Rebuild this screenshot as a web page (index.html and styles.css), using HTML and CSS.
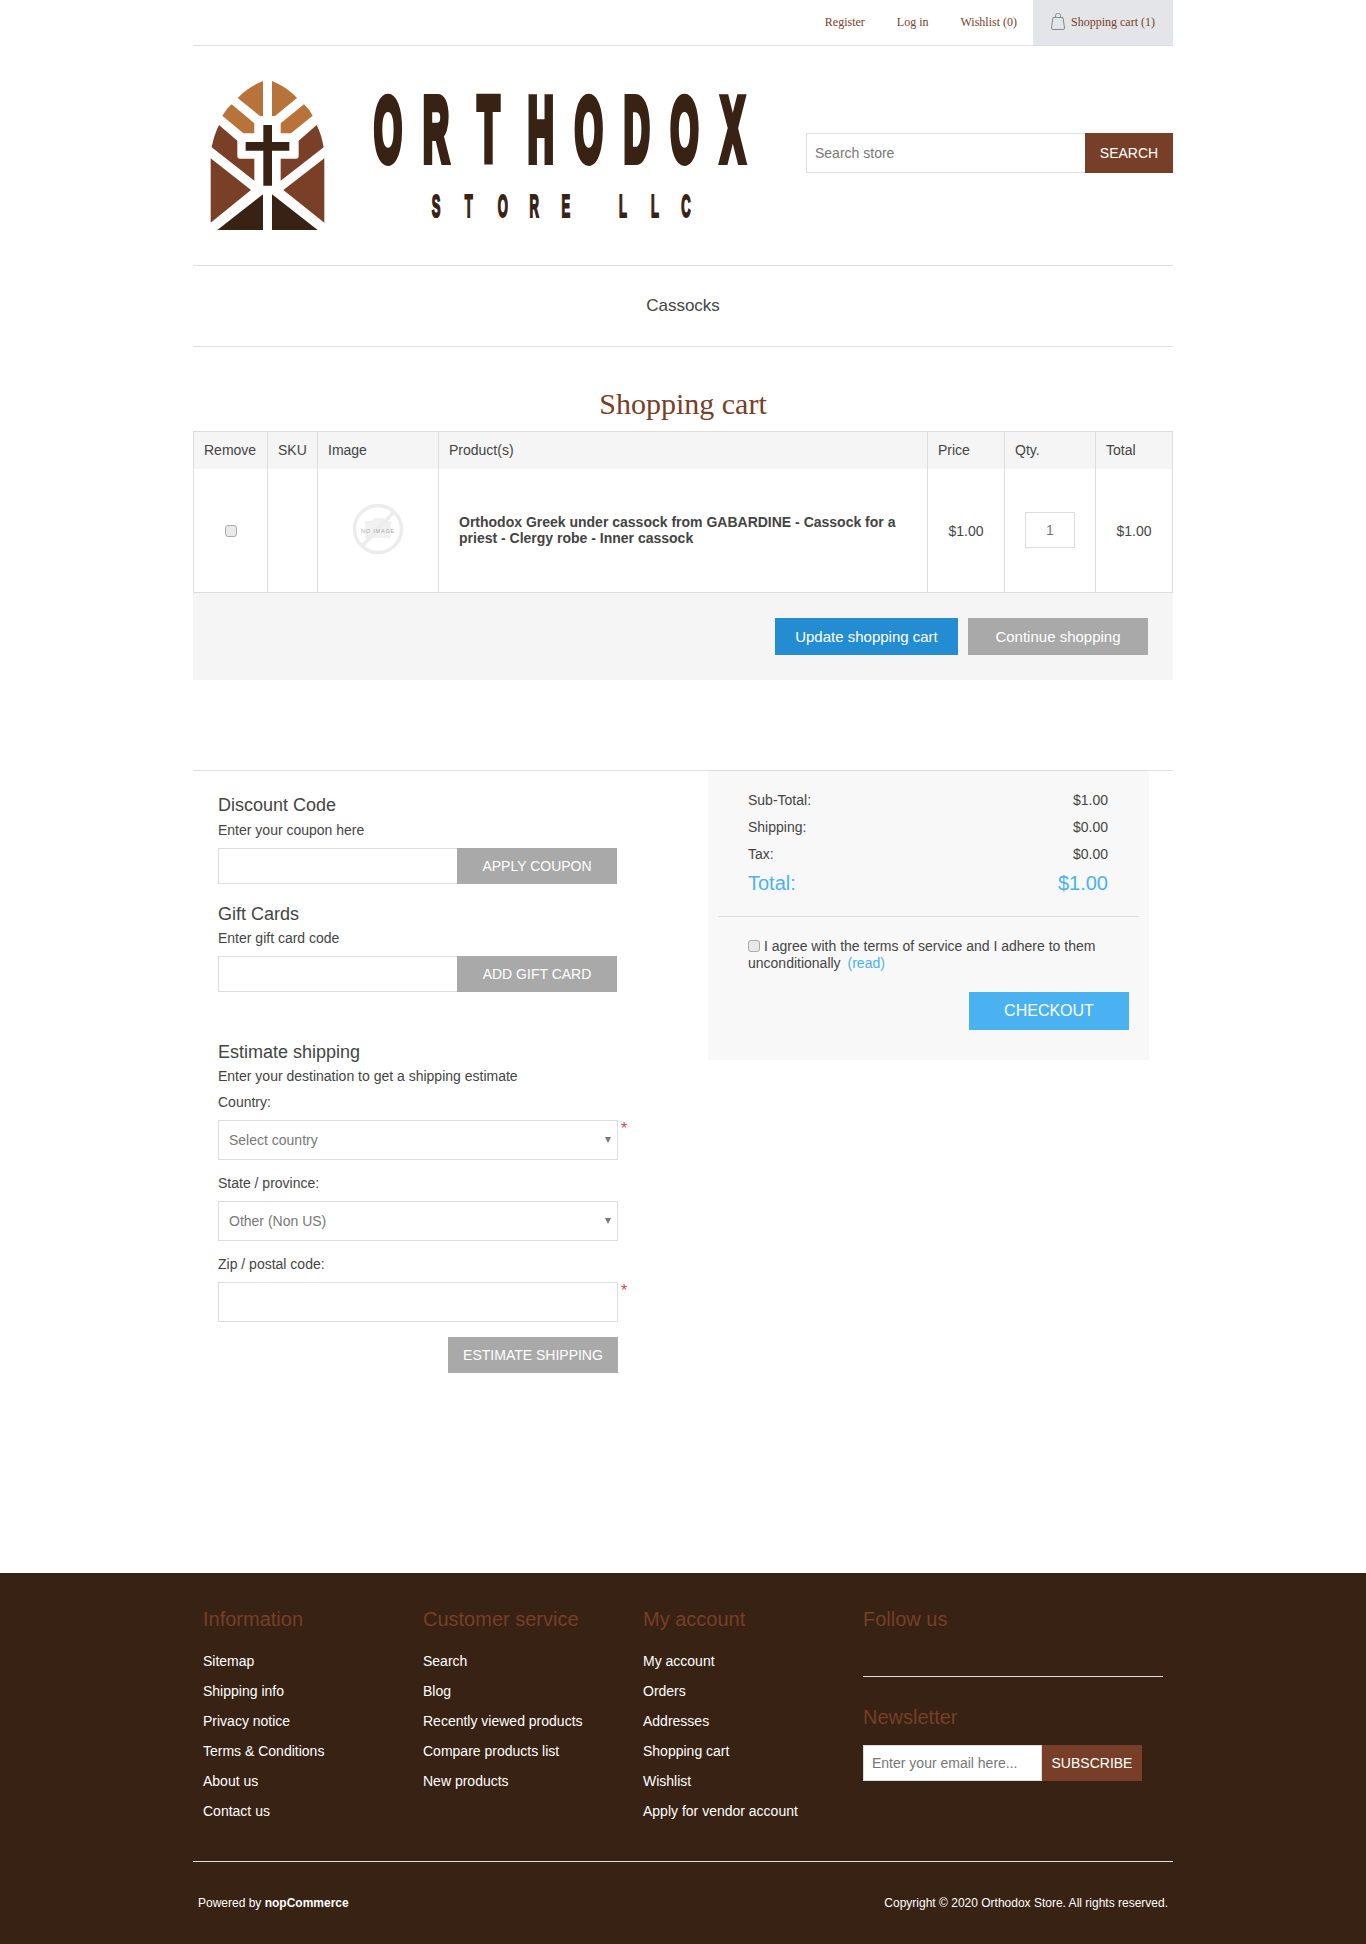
FILE: index.html
```html
<!DOCTYPE html>
<html lang="en">
<head>
  <meta charset="UTF-8">
  <title>Orthodox Store LLC. Shopping cart</title>
  <link rel="stylesheet" href="styles.css">
</head>
<body>
  <div class="wrap">
    <div class="top-bar">
      <a class="top-link" href="#">Register</a>
      <a class="top-link" href="#">Log in</a>
      <a class="top-link" href="#">Wishlist (0)</a>
      <a class="top-cart" href="#">
        <svg class="bag-icon" width="14" height="17" viewBox="0 0 14 17">
          <path d="M2 4.500h10l1.500 10.500q0 1.500-1.500 1.500H2q-1.500 0-1.500-1.500z M4.500 4.500V2.500q0-2 2-2h1q2 0 2 2v2" fill="none" stroke="#8a8a8a" stroke-width="1"/>
        </svg>
        Shopping cart (1)
      </a>
    </div>

    <div class="header">
      <svg class="logo" width="560" height="170" viewBox="0 0 560 170">
        <g transform="scale(.33333)">
          <path class="logo-light" d="M189 33V138H180L113 84Q145 50 189 33Z"/>
          <path class="logo-light" d="M216 33Q260 50 291 84L225 138H216Z"/>
          <path class="logo-light" d="M95 103L163 160V190H130L67 137Q80 115 95 103Z"/>
          <path class="logo-light" d="M242 160L312 103Q330 120 338 137L273 190H242Z"/>
          <path class="logo-mid" d="M57 165L112 212V258Q112 266 120 266H163V332L35 232Q42 195 57 165Z"/>
          <path class="logo-mid" d="M350 165Q365 195 371 232L242 332V266H288Q296 266 296 258V212Z"/>
          <path class="logo-mid" d="M32 265L153 360L32 458Z"/>
          <path class="logo-mid" d="M373 265V458L250 360Z"/>
          <path class="logo-dark" d="M189 373V480H52Z"/>
          <path class="logo-dark" d="M216 373L353 480H216Z"/>
          <path class="logo-dark" d="M190 165H216V216H268V242H216V347H190V242H137V216H190Z"/>
        </g>
        <text class="logo-big" transform="translate(0 91) scale(.4 1)" x="470 590 721 852 972 1092 1211 1332" y="0">ORTHODOX</text>
        <text class="logo-small" transform="translate(0 147) scale(.42 1)" x="562 640 721 796 871 1007 1083 1157" y="0">STORELLC</text>
      </svg>
      <div class="search">
        <input class="search-input" type="text" placeholder="Search store">
        <button class="search-btn">SEARCH</button>
      </div>
    </div>

    <div class="menu"><a href="#">Cassocks</a></div>

    <h1 class="page-title">Shopping cart</h1>

    <table class="cart">
      <colgroup>
        <col class="c-remove"><col class="c-sku"><col class="c-image"><col class="c-product"><col class="c-price"><col class="c-qty"><col class="c-total">
      </colgroup>
      <thead>
        <tr>
          <th class="th-remove">Remove</th><th>SKU</th><th>Image</th><th>Product(s)</th><th>Price</th><th>Qty.</th><th>Total</th>
        </tr>
      </thead>
      <tbody>
        <tr>
          <td class="center cell-check"><input class="check" type="checkbox"></td>
          <td></td>
          <td class="center">
            <svg class="no-image" width="52" height="52" viewBox="0 0 52 52">
              <circle cx="26" cy="26" r="23.500" fill="none" stroke="#ececec" stroke-width="3.500"/>
              <path d="M13 18h7l2-3h9l2 3h6v17H13z" fill="#f1f1f1"/>
              <path d="M11 42L41 10" stroke="#ececec" stroke-width="3.500"/>
              <text class="no-image-text" x="26" y="29.500">NO IMAGE</text>
            </svg>
          </td>
          <td class="product-name"><a href="#">Orthodox Greek under cassock from GABARDINE - Cassock for a priest - Clergy robe - Inner cassock</a></td>
          <td class="center cell-money">$1.00</td>
          <td class="center"><input class="qty" type="text" value="1"></td>
          <td class="center cell-money">$1.00</td>
        </tr>
      </tbody>
    </table>

    <div class="cart-buttons">
      <button class="btn btn-blue">Update shopping cart</button>
      <button class="btn btn-gray">Continue shopping</button>
    </div>

    <div class="cart-footer">
      <div class="cart-left">
        <div class="block">
          <div class="block-title">Discount Code</div>
          <div class="block-hint">Enter your coupon here</div>
          <div class="inline-form">
            <input class="field inline-input" type="text">
            <button class="inline-btn">APPLY COUPON</button>
          </div>
        </div>
        <div class="block block-gift">
          <div class="block-title">Gift Cards</div>
          <div class="block-hint">Enter gift card code</div>
          <div class="inline-form">
            <input class="field inline-input" type="text">
            <button class="inline-btn">ADD GIFT CARD</button>
          </div>
        </div>
        <div class="block shipping">
          <div class="block-title">Estimate shipping</div>
          <div class="block-hint">Enter your destination to get a shipping estimate</div>
          <label class="ship-label">Country:</label>
          <div class="ship-field select-field">
            <select class="field ship-input"><option>Select country</option></select>
            <span class="required">*</span>
          </div>
          <label class="ship-label">State / province:</label>
          <div class="ship-field select-field">
            <select class="field ship-input"><option>Other (Non US)</option></select>
          </div>
          <label class="ship-label">Zip / postal code:</label>
          <div class="ship-field">
            <input class="field ship-input" type="text">
            <span class="required">*</span>
          </div>
          <div class="ship-action"><button class="inline-btn ship-btn">ESTIMATE SHIPPING</button></div>
        </div>
      </div>

      <div class="totals">
        <div class="total-rows">
          <div class="total-row"><span>Sub-Total:</span><span>$1.00</span></div>
          <div class="total-row"><span>Shipping:</span><span>$0.00</span></div>
          <div class="total-row"><span>Tax:</span><span>$0.00</span></div>
          <div class="total-row grand"><span>Total:</span><span>$1.00</span></div>
        </div>
        <div class="terms">
          <div><input class="check check-terms" type="checkbox"> I agree with the terms of service and I adhere to them</div>
          <div>unconditionally <a class="read" href="#">(read)</a></div>
        </div>
        <div class="checkout-row"><button class="checkout">CHECKOUT</button></div>
      </div>
    </div>
  </div>

  <div class="footer">
    <div class="footer-inner">
      <div class="footer-cols">
        <div class="footer-col">
          <div class="footer-title">Information</div>
          <ul class="footer-links">
            <li><a href="#">Sitemap</a></li>
            <li><a href="#">Shipping info</a></li>
            <li><a href="#">Privacy notice</a></li>
            <li><a href="#">Terms &amp; Conditions</a></li>
            <li><a href="#">About us</a></li>
            <li><a href="#">Contact us</a></li>
          </ul>
        </div>
        <div class="footer-col">
          <div class="footer-title">Customer service</div>
          <ul class="footer-links">
            <li><a href="#">Search</a></li>
            <li><a href="#">Blog</a></li>
            <li><a href="#">Recently viewed products</a></li>
            <li><a href="#">Compare products list</a></li>
            <li><a href="#">New products</a></li>
          </ul>
        </div>
        <div class="footer-col">
          <div class="footer-title">My account</div>
          <ul class="footer-links">
            <li><a href="#">My account</a></li>
            <li><a href="#">Orders</a></li>
            <li><a href="#">Addresses</a></li>
            <li><a href="#">Shopping cart</a></li>
            <li><a href="#">Wishlist</a></li>
            <li><a href="#">Apply for vendor account</a></li>
          </ul>
        </div>
        <div class="footer-col footer-col-last">
          <div class="footer-title">Follow us</div>
          <div class="follow-line"></div>
          <div class="footer-title">Newsletter</div>
          <div class="newsletter">
            <input class="newsletter-input" type="text" placeholder="Enter your email here...">
            <button class="newsletter-btn">SUBSCRIBE</button>
          </div>
        </div>
      </div>
      <div class="footer-lower">
        <div>Powered by <b>nopCommerce</b></div>
        <div>Copyright &copy; 2020 Orthodox Store. All rights reserved.</div>
      </div>
    </div>
  </div>
</body>
</html>
```

FILE: styles.css
```css
* {
  box-sizing: border-box;
}

body {
  margin: 0;
  font-family: "Liberation Sans", Arial, sans-serif;
  font-size: 14px;
  color: #444;
  background: #fff;
}

a {
  color: inherit;
  text-decoration: none;
}

button {
  font-family: inherit;
  border: none;
  cursor: pointer;
}

.wrap {
  width: 980px;
  margin-left: 193px;
}

/* top bar */
.top-bar {
  display: flex;
  justify-content: flex-end;
  height: 46px;
  border-bottom: 1px solid #ddd;
  font-family: "Liberation Serif", "Times New Roman", serif;
  font-size: 12px;
  color: #773f27;
}

.top-link {
  padding: 0 16px;
  line-height: 44px;
}

.top-cart {
  display: flex;
  align-items: center;
  gap: 6px;
  width: 140px;
  padding-left: 18px;
  background: #e4e5e9;
}

.bag-icon {
  margin-top: -3px;
}

/* header */
.header {
  display: flex;
  justify-content: space-between;
  height: 220px;
  border-bottom: 1px solid #ddd;
}

.logo {
  margin: 24px 0 0 7px;
}

.logo-light { fill: #b8733b; }
.logo-mid { fill: #7a4027; }
.logo-dark { fill: #382214; }

.logo-big,
.logo-small {
  font-family: "Liberation Sans", Arial, sans-serif;
  font-weight: bold;
  text-anchor: middle;
  fill: #382214;
  stroke: #382214;
}

.logo-big {
  font-size: 90px;
  stroke-width: 8px;
}

.logo-small {
  font-size: 31px;
  stroke-width: 2px;
}

.search {
  display: flex;
  width: 367px;
  height: 40px;
  margin-top: 87px;
}

.search-input {
  flex: 1;
  min-width: 0;
  padding: 0 8px;
  border: 1px solid #ddd;
  border-right: none;
  font-family: inherit;
  font-size: 14px;
}

.search-input::placeholder,
.newsletter-input::placeholder {
  color: #777;
}

.search-btn {
  width: 88px;
  background: #773f27;
  color: #fff;
  font-size: 14px;
}

/* menu */
.menu {
  height: 81px;
  border-bottom: 1px solid #ddd;
  text-align: center;
  font-size: 17px;
  line-height: 79px;
}

.page-title {
  margin: 37px 0 0;
  height: 47px;
  text-align: center;
  font-family: "Liberation Serif", "Times New Roman", serif;
  font-size: 30px;
  line-height: 40px;
  font-weight: normal;
  color: #773f27;
}

/* cart table */
.cart {
  width: 980px;
  border-collapse: collapse;
  table-layout: fixed;
}

.c-remove { width: 74px; }
.c-sku { width: 50px; }
.c-image { width: 121px; }
.c-price { width: 77px; }
.c-qty { width: 91px; }
.c-total { width: 77px; }

.cart th,
.cart td {
  border: 1px solid #ddd;
}

.cart th {
  height: 37px;
  padding: 0 10px;
  border-bottom: none;
  background: #f5f5f5;
  font-weight: normal;
  text-align: left;
}

.cart .th-remove {
  padding-left: 10px;
}

.cart td {
  height: 124px;
  border-top: none;
}

.center {
  text-align: center;
}

.cart .cell-check {
  padding-bottom: 2px;
}

.cart .cell-money {
  padding-top: 2px;
}

.check {
  appearance: none;
  width: 12px;
  height: 12px;
  margin: 0;
  border: 1px solid #aaa;
  border-radius: 3px;
  background: #e9e9e9;
  vertical-align: middle;
}

.no-image {
  display: block;
  margin: 0 auto 2px;
}

.no-image-text {
  font-size: 5.500px;
  letter-spacing: .8px;
  text-anchor: middle;
  fill: #aaa;
}

.cart .product-name {
  padding: 0 20px;
  font-weight: bold;
  line-height: 16px;
}

.qty {
  display: block;
  width: 50px;
  height: 36px;
  margin: 0 auto;
  border: 1px solid #ddd;
  text-align: center;
  font-family: inherit;
  font-size: 14px;
  color: #777;
}

.cart-buttons {
  display: flex;
  justify-content: flex-end;
  gap: 10px;
  height: 87px;
  padding: 25px 25px 0 0;
  background: #f5f5f5;
}

.btn {
  height: 37px;
  color: #fff;
  font-size: 15px;
}

.btn-blue {
  width: 183px;
  background: #248cd0;
}

.btn-gray {
  width: 180px;
  background: #a9a9a9;
}

/* discount, gift card, shipping */
.cart-footer {
  display: flex;
  margin-top: 90px;
  border-top: 1px solid #ddd;
}

.cart-left {
  width: 515px;
  height: 802px;
  padding: 24px 0 0 25px;
}

.block-title {
  height: 20px;
  margin-bottom: 6px;
  font-size: 18px;
  line-height: 20px;
}

.block-hint {
  height: 18px;
  line-height: 18px;
}

.inline-form {
  display: flex;
  width: 399px;
  height: 36px;
  margin: 9px 0 20px;
}

.field {
  border: 1px solid #ddd;
  background: #fff;
  font-family: inherit;
  font-size: 14px;
  color: #777;
}

.inline-input {
  flex: 1;
  min-width: 0;
  border-right: none;
}

.inline-btn {
  width: 160px;
  background: #a9a9a9;
  color: #fff;
  font-size: 14px;
}

.block-gift .block-title {
  margin-bottom: 5px;
}

.block-gift .inline-form {
  margin-bottom: 50px;
}

.shipping {
  width: 400px;
}

.shipping .block-title {
  margin-bottom: 5px;
}

.ship-label {
  display: block;
  height: 18px;
  margin: 14px 0 9px;
  line-height: 18px;
}

.shipping .block-hint + .ship-label {
  margin-top: 8px;
}

.ship-field {
  position: relative;
  height: 40px;
}

.ship-input {
  display: block;
  width: 100%;
  height: 40px;
  padding: 0 10px;
}

select.ship-input {
  appearance: none;
}

.select-field::after {
  content: "";
  position: absolute;
  top: 17px;
  right: 7px;
  border-left: 3px solid transparent;
  border-right: 3px solid transparent;
  border-top: 6px solid #777;
}

.required {
  position: absolute;
  top: 1px;
  left: 403px;
  color: #e4434b;
  font-size: 16px;
  line-height: 16px;
}

.ship-action {
  display: flex;
  justify-content: flex-end;
  margin-top: 15px;
}

.ship-btn {
  width: 170px;
  height: 36px;
}

/* totals */
.totals {
  width: 441px;
  height: 289px;
  padding-top: 20px;
  background: #f8f8f8;
}

.total-rows {
  margin: 0 10px;
  padding: 0 31px 22px 30px;
  border-bottom: 1px solid #ddd;
}

.total-row {
  display: flex;
  justify-content: space-between;
  height: 18px;
  margin-bottom: 9px;
  line-height: 18px;
}

.grand {
  height: 22px;
  margin-bottom: 0;
  margin-top: 9px;
  font-size: 20px;
  line-height: 22px;
  color: #4ab2f1;
}

.terms {
  width: 380px;
  margin: 21px 0 0 40px;
  line-height: 17px;
}

.check-terms {
  margin-top: -2px;
}

.read {
  margin-left: 3px;
  color: #4ab2f1;
}

.checkout-row {
  display: flex;
  justify-content: flex-end;
  margin: 20px 20px 0 0;
}

.checkout {
  width: 160px;
  height: 38px;
  background: #4ab2f1;
  color: #fff;
  font-size: 16px;
}

/* footer */
.footer {
  height: 371px;
  background: #382214;
  color: #fff;
}

.footer-inner {
  width: 980px;
  margin-left: 193px;
}

.footer-cols {
  display: grid;
  grid-template-columns: repeat(3, 220px) 320px;
  height: 289px;
  padding: 34px 0 0 10px;
  border-bottom: 1px solid #ddd;
}

.footer-title {
  height: 24px;
  font-size: 20px;
  line-height: 24px;
  color: #773f27;
}

.footer-links {
  margin: 0;
  padding: 0;
  list-style: none;
  padding-top: 15px;
}

.footer-links li {
  height: 30px;
  line-height: 30px;
}

.follow-line {
  width: 300px;
  height: 1px;
  margin: 45px 0 28px;
  background: #ddd;
}

.newsletter {
  display: flex;
  height: 36px;
  margin-top: 16px;
}

.newsletter-input {
  width: 179px;
  padding: 0 8px;
  border: 1px solid #ddd;
  font-family: inherit;
  font-size: 14px;
}

.newsletter-btn {
  width: 100px;
  background: #773f27;
  color: #fff;
  font-size: 14px;
}

.footer-lower {
  display: flex;
  justify-content: space-between;
  padding: 33px 5px 0;
  font-size: 12px;
  line-height: 16px;
}
```
